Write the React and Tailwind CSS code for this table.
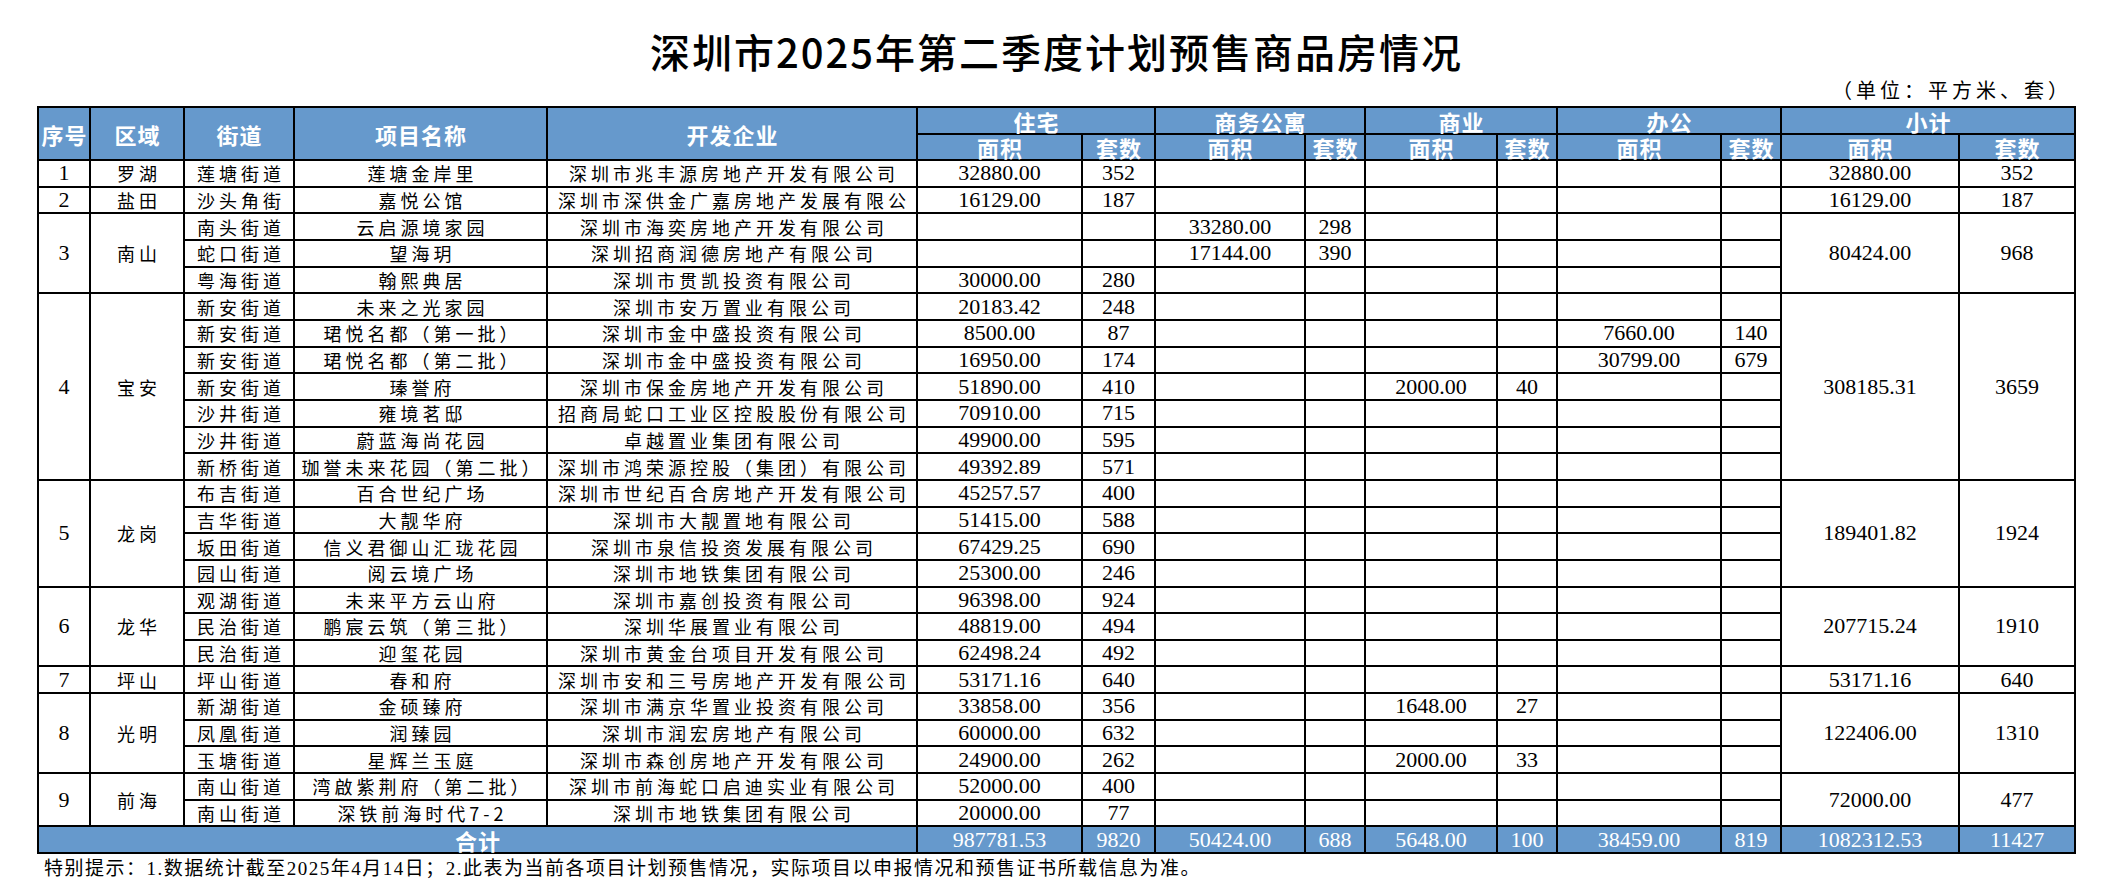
import React from "react";

const cols = [52, 94, 110, 253, 370, 165, 73, 150, 60, 132, 60, 164, 60, 178, 116];

const regions = [
  {
    no: "1",
    area: "罗湖",
    total: ["32880.00", "352"],
    rows: [["莲塘街道", "莲塘金岸里", "深圳市兆丰源房地产开发有限公司", "32880.00", "352", "", "", "", "", "", ""]],
  },
  {
    no: "2",
    area: "盐田",
    total: ["16129.00", "187"],
    rows: [["沙头角街", "嘉悦公馆", "深圳市深供金广嘉房地产发展有限公", "16129.00", "187", "", "", "", "", "", ""]],
  },
  {
    no: "3",
    area: "南山",
    total: ["80424.00", "968"],
    rows: [
      ["南头街道", "云启源境家园", "深圳市海奕房地产开发有限公司", "", "", "33280.00", "298", "", "", "", ""],
      ["蛇口街道", "望海玥", "深圳招商润德房地产有限公司", "", "", "17144.00", "390", "", "", "", ""],
      ["粤海街道", "翰熙典居", "深圳市贯凯投资有限公司", "30000.00", "280", "", "", "", "", "", ""],
    ],
  },
  {
    no: "4",
    area: "宝安",
    total: ["308185.31", "3659"],
    rows: [
      ["新安街道", "未来之光家园", "深圳市安万置业有限公司", "20183.42", "248", "", "", "", "", "", ""],
      ["新安街道", "珺悦名都（第一批）", "深圳市金中盛投资有限公司", "8500.00", "87", "", "", "", "", "7660.00", "140"],
      ["新安街道", "珺悦名都（第二批）", "深圳市金中盛投资有限公司", "16950.00", "174", "", "", "", "", "30799.00", "679"],
      ["新安街道", "瑧誉府", "深圳市保金房地产开发有限公司", "51890.00", "410", "", "", "2000.00", "40", "", ""],
      ["沙井街道", "雍境茗邸", "招商局蛇口工业区控股股份有限公司", "70910.00", "715", "", "", "", "", "", ""],
      ["沙井街道", "蔚蓝海尚花园", "卓越置业集团有限公司", "49900.00", "595", "", "", "", "", "", ""],
      ["新桥街道", "珈誉未来花园（第二批）", "深圳市鸿荣源控股（集团）有限公司", "49392.89", "571", "", "", "", "", "", ""],
    ],
  },
  {
    no: "5",
    area: "龙岗",
    total: ["189401.82", "1924"],
    rows: [
      ["布吉街道", "百合世纪广场", "深圳市世纪百合房地产开发有限公司", "45257.57", "400", "", "", "", "", "", ""],
      ["吉华街道", "大靓华府", "深圳市大靓置地有限公司", "51415.00", "588", "", "", "", "", "", ""],
      ["坂田街道", "信义君御山汇珑花园", "深圳市泉信投资发展有限公司", "67429.25", "690", "", "", "", "", "", ""],
      ["园山街道", "阅云境广场", "深圳市地铁集团有限公司", "25300.00", "246", "", "", "", "", "", ""],
    ],
  },
  {
    no: "6",
    area: "龙华",
    total: ["207715.24", "1910"],
    rows: [
      ["观湖街道", "未来平方云山府", "深圳市嘉创投资有限公司", "96398.00", "924", "", "", "", "", "", ""],
      ["民治街道", "鹏宸云筑（第三批）", "深圳华展置业有限公司", "48819.00", "494", "", "", "", "", "", ""],
      ["民治街道", "迎玺花园", "深圳市黄金台项目开发有限公司", "62498.24", "492", "", "", "", "", "", ""],
    ],
  },
  {
    no: "7",
    area: "坪山",
    total: ["53171.16", "640"],
    rows: [["坪山街道", "春和府", "深圳市安和三号房地产开发有限公司", "53171.16", "640", "", "", "", "", "", ""]],
  },
  {
    no: "8",
    area: "光明",
    total: ["122406.00", "1310"],
    rows: [
      ["新湖街道", "金硕臻府", "深圳市满京华置业投资有限公司", "33858.00", "356", "", "", "1648.00", "27", "", ""],
      ["凤凰街道", "润臻园", "深圳市润宏房地产有限公司", "60000.00", "632", "", "", "", "", "", ""],
      ["玉塘街道", "星辉兰玉庭", "深圳市森创房地产开发有限公司", "24900.00", "262", "", "", "2000.00", "33", "", ""],
    ],
  },
  {
    no: "9",
    area: "前海",
    total: ["72000.00", "477"],
    rows: [
      ["南山街道", "湾啟紫荆府（第二批）", "深圳市前海蛇口启迪实业有限公司", "52000.00", "400", "", "", "", "", "", ""],
      ["南山街道", "深铁前海时代7-2", "深圳市地铁集团有限公司", "20000.00", "77", "", "", "", "", "", ""],
    ],
  },
];

const sum = ["987781.53", "9820", "50424.00", "688", "5648.00", "100", "38459.00", "819", "1082312.53", "11427"];

const cell = "border-2 border-black text-center align-middle p-0 whitespace-nowrap";
const txt = "font-['Noto_Sans_CJK_SC',sans-serif] text-[18px] tracking-[4px] pl-[4px] leading-[20px] text-black";
const num = "font-['Liberation_Serif','Noto_Sans_CJK_SC',serif] text-[22px] leading-[20px] text-black";
const head = "bg-[#6699cc] text-white font-['Noto_Sans_CJK_SC',sans-serif] font-bold text-[22px] leading-[22px] tracking-[1px] pl-[1px]";

export default function App() {
  return (
    <div className="bg-white w-[2104px] h-[890px] pl-[37px]">
      <div className="w-[2039px]">
        <h1 className="pt-[28px] text-center font-['Noto_Sans_CJK_SC',sans-serif] font-medium text-[40px] leading-[46px] tracking-[2px] text-black">
          深圳市2025年第二季度计划预售商品房情况
        </h1>
        <div className="h-[32px] text-right pr-[4px] font-['Noto_Sans_CJK_SC',sans-serif] text-[20px] leading-[32px] tracking-[4px] text-black">
          （单位：平方米、套）
        </div>

        <table className="table-fixed border-collapse w-[2037px]">
          <colgroup>
            {cols.map((w, i) => (
              <col key={i} style={{ width: w }} />
            ))}
          </colgroup>
          <thead>
            <tr className="h-[27px]">
              <th rowSpan={2} className={`${cell} ${head} tracking-[0px] pl-0`}>序号</th>
              <th rowSpan={2} className={`${cell} ${head}`}>区域</th>
              <th rowSpan={2} className={`${cell} ${head}`}>街道</th>
              <th rowSpan={2} className={`${cell} ${head}`}>项目名称</th>
              <th rowSpan={2} className={`${cell} ${head}`}>开发企业</th>
              <th colSpan={2} className={`${cell} ${head}`}>住宅</th>
              <th colSpan={2} className={`${cell} ${head}`}>商务公寓</th>
              <th colSpan={2} className={`${cell} ${head}`}>商业</th>
              <th colSpan={2} className={`${cell} ${head}`}>办公</th>
              <th colSpan={2} className={`${cell} ${head}`}>小计</th>
            </tr>
            <tr className="h-[26px]">
              {[0, 1, 2, 3, 4].map((k) => (
                <React.Fragment key={k}>
                  <th className={`${cell} ${head}`}>面积</th>
                  <th className={`${cell} ${head} tracking-[0px] pl-0`}>套数</th>
                </React.Fragment>
              ))}
            </tr>
          </thead>
          <tbody>
            {regions.map((r) =>
              r.rows.map((row, i) => (
                <tr key={r.no + "-" + i} className="h-[26.67px]">
                  {i === 0 && (
                    <td rowSpan={r.rows.length} className={`${cell} ${num}`}>{r.no}</td>
                  )}
                  {i === 0 && (
                    <td rowSpan={r.rows.length} className={`${cell} ${txt}`}>{r.area}</td>
                  )}
                  <td className={`${cell} ${txt}`}>{row[0]}</td>
                  <td className={`${cell} ${txt}`}>{row[1]}</td>
                  <td className={`${cell} ${txt}`}>{row[2]}</td>
                  {row.slice(3).map((v, j) => (
                    <td key={j} className={`${cell} ${num}`}>{v}</td>
                  ))}
                  {i === 0 && (
                    <td rowSpan={r.rows.length} className={`${cell} ${num}`}>{r.total[0]}</td>
                  )}
                  {i === 0 && (
                    <td rowSpan={r.rows.length} className={`${cell} ${num}`}>{r.total[1]}</td>
                  )}
                </tr>
              ))
            )}
            <tr className="h-[27px]">
              <td colSpan={5} className={`${cell} ${head}`}>合计</td>
              {sum.map((v, j) => (
                <td key={j} className={`${cell} bg-[#6699cc] text-white font-['Liberation_Serif',serif] text-[22px] leading-[20px]`}>
                  {v}
                </td>
              ))}
            </tr>
          </tbody>
        </table>

        <div className="pl-[7px] font-['Liberation_Serif','Noto_Sans_CJK_SC',serif] text-[19px] leading-[30px] tracking-[1.5px] text-black whitespace-nowrap">
          特别提示：1.数据统计截至2025年4月14日；2.此表为当前各项目计划预售情况，实际项目以申报情况和预售证书所载信息为准。
        </div>
      </div>
    </div>
  );
}
